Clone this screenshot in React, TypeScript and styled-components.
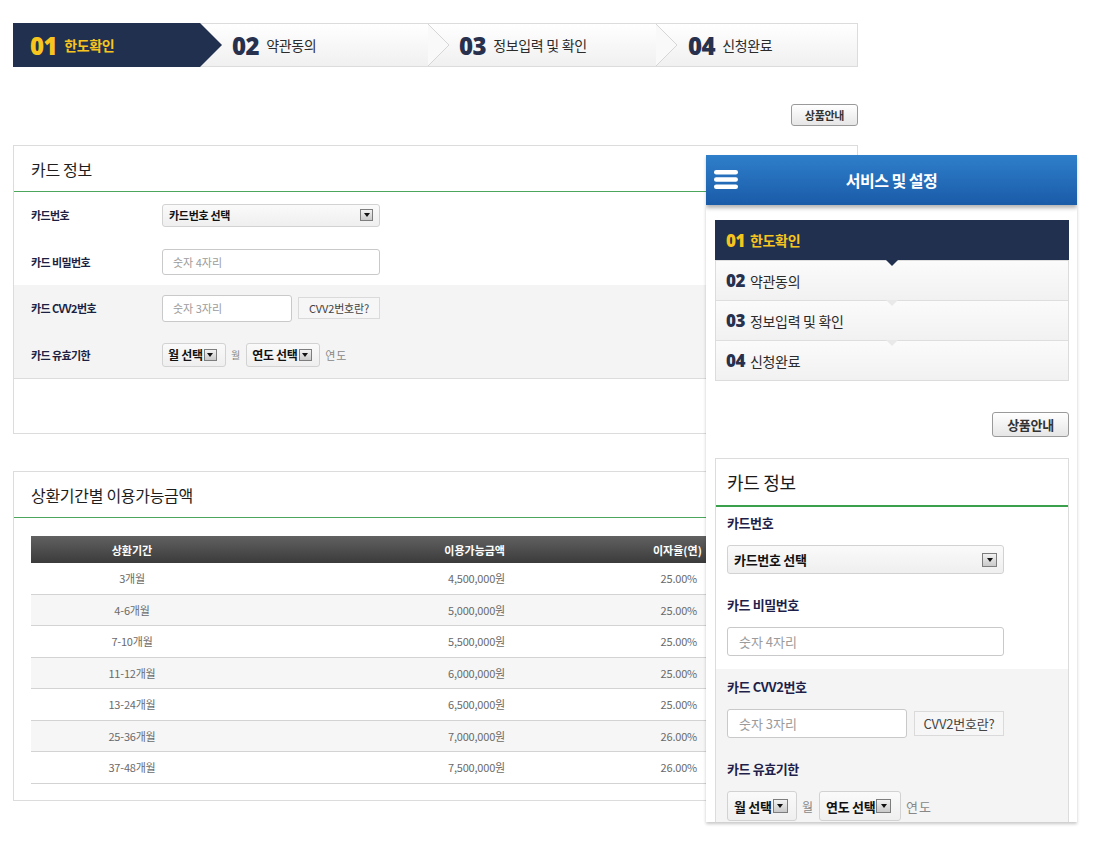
import React from 'react';
import styled, { createGlobalStyle } from 'styled-components';

const GlobalStyle = createGlobalStyle`
  html, body {
    margin: 0;
    padding: 0;
    background: #fff;
  }
  body {
    font-family: 'Noto Sans CJK KR', 'Noto Sans', sans-serif;
    color: #333;
  }
  * {
    box-sizing: border-box;
  }
`;

const NUM_FONT = `'Open Sans', 'Noto Sans CJK KR', sans-serif`;

const Page = styled.div`
	position: relative;
	width: 1100px;
	height: 846px;
	overflow: hidden;
`;

const Desktop = styled.main`
	width: 845px;
	margin-left: 13px;
	padding-top: 23px;
`;

/* ---------- step bar (desktop) ---------- */

const StepBar = styled.ol`
	display: grid;
	grid-template-columns: 209px 228px 228px 1fr;
	height: 44px;
	margin: 0;
	padding: 0;
	list-style: none;
	border: 1px solid #dcdcdc;
	border-left: none;
	background: linear-gradient(#ffffff, #f0f0f0);
`;

const Step = styled.li<{ $active?: boolean; $pad: number }>`
	position: relative;
	display: flex;
	align-items: center;
	gap: 7px;
	padding-left: ${(p) => p.$pad}px;
	${(p) =>
		p.$active &&
		`
		margin: -1px 0;
		background: #22304f;
		clip-path: polygon(0 0, calc(100% - 22px) 0, 100% 50%, calc(100% - 22px) 100%, 0 100%);
	`}
`;

const StepNum = styled.span<{ $active?: boolean; $size: number }>`
	font-family: ${NUM_FONT};
	font-weight: 800;
	font-size: ${(p) => p.$size}px;
	letter-spacing: -0.5px;
	color: ${(p) => (p.$active ? '#f7c51d' : '#27314d')};
`;

const StepText = styled.span<{ $active?: boolean; $size: number }>`
	font-size: ${(p) => p.$size}px;
	font-weight: ${(p) => (p.$active ? 700 : 400)};
	color: ${(p) => (p.$active ? '#f7c51d' : '#2b2b2b')};
	letter-spacing: -0.3px;
`;

const Chevron = styled.svg`
	position: absolute;
	right: 0;
	top: 0;
`;

/* ---------- buttons ---------- */

const ButtonRow = styled.div<{ $top: number; $right?: number }>`
	display: flex;
	justify-content: flex-end;
	margin-top: ${(p) => p.$top}px;
	padding-right: ${(p) => p.$right ?? 0}px;
`;

const GuideButton = styled.button<{ $w: number; $h: number; $fs: number }>`
	width: ${(p) => p.$w}px;
	height: ${(p) => p.$h}px;
	padding: 0;
	border: 1px solid #9a9a9a;
	border-radius: 3px;
	background: linear-gradient(#ffffff, #e6e6e6);
	font-family: inherit;
	font-size: ${(p) => p.$fs}px;
	font-weight: 700;
	color: #333;
	letter-spacing: -0.3px;
`;

/* ---------- desktop boxes ---------- */

const Box = styled.section<{ $top: number; $bottom: number }>`
	margin-top: ${(p) => p.$top}px;
	padding-bottom: ${(p) => p.$bottom}px;
	border: 1px solid #dcdcdc;
	background: #fff;
`;

const BoxTitle = styled.h2`
	display: flex;
	align-items: center;
	height: 46px;
	margin: 0;
	padding: 0 17px;
	border-bottom: 1px solid #4ca65b;
	font-size: 16px;
	font-weight: 400;
	color: #1d1d1d;
	letter-spacing: -0.3px;
`;

const FormSection = styled.div<{ $shaded?: boolean }>`
	background: ${(p) => (p.$shaded ? '#f4f4f4' : '#fff')};
	border-bottom: ${(p) => (p.$shaded ? '1px solid #dcdcdc' : 'none')};
`;

const FormRow = styled.div`
	display: flex;
	align-items: center;
	height: 46.5px;
	padding-left: 17px;
`;

const RowLabel = styled.div`
	width: 131px;
	font-size: 11px;
	font-weight: 700;
	color: #1d1f42;
	letter-spacing: -0.6px;
`;

const Controls = styled.div<{ $gap: number }>`
	display: flex;
	align-items: center;
	gap: ${(p) => p.$gap}px;
`;

const SelectBox = styled.div<{ $w: number; $h: number; $fs: number; $pad: number; $spread?: boolean }>`
	display: flex;
	align-items: center;
	justify-content: ${(p) => (p.$spread ? 'space-between' : 'flex-start')};
	gap: 1px;
	width: ${(p) => p.$w}px;
	height: ${(p) => p.$h}px;
	padding: 0 ${(p) => p.$pad}px;
	border: 1px solid #d2d2d2;
	border-radius: 3px;
	background: linear-gradient(#fafafa, #efefef);
	font-size: ${(p) => p.$fs}px;
	font-weight: 700;
	color: #111;
	letter-spacing: -0.3px;
`;

const Caret = styled.span<{ $s: number }>`
	display: inline-flex;
	align-items: center;
	justify-content: center;
	flex: none;
	width: ${(p) => p.$s + 1}px;
	height: ${(p) => p.$s}px;
	border: 1px solid #7d7d7d;
	background: linear-gradient(#f2f2f2, #c9c9c9);

	&::before {
		content: '';
		border-left: 3.5px solid transparent;
		border-right: 3.5px solid transparent;
		border-top: 4px solid #111;
	}
`;

const TextInput = styled.div<{ $w: number; $h: number; $fs: number; $pad: number }>`
	display: flex;
	align-items: center;
	width: ${(p) => p.$w}px;
	height: ${(p) => p.$h}px;
	padding-left: ${(p) => p.$pad}px;
	border: 1px solid #c9c9c9;
	border-radius: 3px;
	background: #fff;
	font-size: ${(p) => p.$fs}px;
	color: #9b9b9b;
`;

const SmallButton = styled.div<{ $w: number; $h: number; $fs: number }>`
	display: flex;
	align-items: center;
	justify-content: center;
	width: ${(p) => p.$w}px;
	height: ${(p) => p.$h}px;
	border: 1px solid #dadada;
	background: #f6f6f6;
	font-size: ${(p) => p.$fs}px;
	color: #444;
	letter-spacing: -0.2px;
`;

const Unit = styled.span<{ $fs: number }>`
	font-size: ${(p) => p.$fs}px;
	color: #888;
	letter-spacing: 1px;
`;

/* ---------- table ---------- */

const Table = styled.div`
	margin: 18px 17px 0;
	display: grid;
	grid-template-columns: 202px 287px 192px 1fr;
`;

const HeadCell = styled.div<{ $align: string; $pr?: number; $pl?: number }>`
	display: flex;
	align-items: center;
	justify-content: ${(p) => p.$align};
	height: 27px;
	padding-right: ${(p) => p.$pr ?? 0}px;
	padding-left: ${(p) => p.$pl ?? 0}px;
	background: linear-gradient(#616161, #3b3b3b);
	font-size: 11px;
	font-weight: 700;
	color: #fff;
	white-space: nowrap;
`;

const Cell = styled.div<{ $align: string; $shade: boolean; $pr?: number }>`
	display: flex;
	align-items: center;
	justify-content: ${(p) => p.$align};
	height: 31.5px;
	padding-right: ${(p) => p.$pr ?? 0}px;
	border-bottom: 1px solid #d3d3d3;
	background: ${(p) => (p.$shade ? '#f6f6f6' : '#fff')};
	font-size: 11px;
	color: #6a6a6a;
	letter-spacing: -0.2px;
`;

/* ---------- mobile overlay ---------- */

const MobilePanel = styled.aside`
	position: absolute;
	left: 706px;
	top: 155px;
	width: 371px;
	height: 667px;
	overflow: hidden;
	background: #fff;
	box-shadow: 0 2px 3px rgba(0, 0, 0, 0.22);
`;

const MobileHeader = styled.header`
	position: relative;
	display: flex;
	align-items: center;
	justify-content: center;
	height: 50px;
	background: linear-gradient(#2f7fcb, #1a5ba8);
	box-shadow: 0 3px 4px rgba(0, 0, 0, 0.3);
	color: #fff;
	font-size: 16px;
	font-weight: 700;
	letter-spacing: -0.5px;
`;

const MenuIcon = styled.svg`
	position: absolute;
	left: 8px;
	top: 15px;
`;

const MobileSteps = styled.ol`
	margin: 15px 8px 0 9px;
	padding: 0;
	list-style: none;
	border: 1px solid #dcdcdc;
	border-top: none;
`;

const MobileStep = styled.li<{ $active?: boolean }>`
	position: relative;
	display: flex;
	align-items: center;
	gap: 5px;
	height: 40px;
	background: ${(p) => (p.$active ? '#22304f' : 'linear-gradient(#fbfbfb, #f1f1f1)')};
	border-top: ${(p) => (p.$active ? 'none' : '1px solid #dedede')};
	margin: ${(p) => (p.$active ? '0 -1px' : '0')};
	padding-left: ${(p) => (p.$active ? 11 : 10)}px;

	&::after {
		content: '';
		position: absolute;
		left: 50%;
		bottom: -6px;
		margin-left: -6px;
		border-left: 6px solid transparent;
		border-right: 6px solid transparent;
		border-top: 6px solid ${(p) => (p.$active ? '#22304f' : '#e9e9e9')};
		z-index: 2;
	}

	&:last-child::after {
		display: none;
	}
`;

const MobileBox = styled.section`
	margin: 21px 8px 0 9px;
	border: 1px solid #dcdcdc;
`;

const MobileTitle = styled.h2`
	display: flex;
	align-items: center;
	height: 48px;
	margin: 0;
	padding-left: 11px;
	border-bottom: 2px solid #3aa04b;
	font-size: 18px;
	font-weight: 400;
	color: #1a1a1a;
	letter-spacing: -0.3px;
`;

const MobileSection = styled.div<{ $shaded?: boolean }>`
	display: flex;
	flex-direction: column;
	gap: 22px;
	padding: ${(p) => (p.$shaded ? '9px 11px 20px' : '7px 11px 13px')};
	background: ${(p) => (p.$shaded ? '#f4f4f4' : '#fff')};
`;

const Field = styled.div`
	display: flex;
	flex-direction: column;
	gap: 14px;
`;

const FieldLabel = styled.div`
	height: 17px;
	line-height: 17px;
	font-size: 13px;
	font-weight: 700;
	color: #1f1f4a;
	letter-spacing: -0.4px;
`;

/* ---------- data ---------- */

const desktopSteps = [
	{ num: '01', text: '한도확인', pad: 17 },
	{ num: '02', text: '약관동의', pad: 10 },
	{ num: '03', text: '정보입력 및 확인', pad: 9 },
	{ num: '04', text: '신청완료', pad: 10 },
];

const rows = [
	['3개월', '4,500,000원', '25.00%'],
	['4-6개월', '5,000,000원', '25.00%'],
	['7-10개월', '5,500,000원', '25.00%'],
	['11-12개월', '6,000,000원', '25.00%'],
	['13-24개월', '6,500,000원', '25.00%'],
	['25-36개월', '7,000,000원', '26.00%'],
	['37-48개월', '7,500,000원', '26.00%'],
];

const StepChevron: React.FC = () => (
	<Chevron width="22" height="42" viewBox="0 0 22 42">
		<path d="M0 0 L21 21 L0 42 Z" fill="#f9f9f9" />
		<path d="M0 0 L21 21 L0 42" fill="none" stroke="#d6d6d6" strokeWidth="1" />
	</Chevron>
);

export default function App() {
	return (
		<Page>
			<GlobalStyle />
			<Desktop>
				<StepBar>
					{desktopSteps.map((s, i) => (
						<Step key={s.num} $active={i === 0} $pad={s.pad}>
							<StepNum $active={i === 0} $size={24}>
								{s.num}
							</StepNum>
							<StepText $active={i === 0} $size={14}>
								{s.text}
							</StepText>
							{(i === 1 || i === 2) && <StepChevron />}
						</Step>
					))}
				</StepBar>

				<ButtonRow $top={37}>
					<GuideButton $w={67} $h={22} $fs={11}>
						상품안내
					</GuideButton>
				</ButtonRow>

				<Box $top={19} $bottom={54}>
					<BoxTitle>카드 정보</BoxTitle>
					<FormSection>
						<FormRow>
							<RowLabel>카드번호</RowLabel>
							<SelectBox $w={218} $h={23} $fs={11} $pad={6} $spread>
								카드번호 선택
								<Caret $s={12} />
							</SelectBox>
						</FormRow>
						<FormRow>
							<RowLabel>카드 비밀번호</RowLabel>
							<TextInput $w={218} $h={26} $fs={11} $pad={10}>
								숫자 4자리
							</TextInput>
						</FormRow>
					</FormSection>
					<FormSection $shaded>
						<FormRow>
							<RowLabel>카드 CVV2번호</RowLabel>
							<Controls $gap={6}>
								<TextInput $w={130} $h={27} $fs={11} $pad={10}>
									숫자 3자리
								</TextInput>
								<SmallButton $w={82} $h={22} $fs={11}>
									CVV2번호란?
								</SmallButton>
							</Controls>
						</FormRow>
						<FormRow>
							<RowLabel>카드 유효기한</RowLabel>
							<Controls $gap={5}>
								<SelectBox $w={64} $h={24} $fs={12} $pad={5}>
									월 선택
									<Caret $s={12} />
								</SelectBox>
								<Unit $fs={10}>월</Unit>
								<SelectBox $w={74} $h={24} $fs={12} $pad={5}>
									연도 선택
									<Caret $s={12} />
								</SelectBox>
								<Unit $fs={11}>연도</Unit>
							</Controls>
						</FormRow>
					</FormSection>
				</Box>

				<Box $top={37} $bottom={16}>
					<BoxTitle>상환기간별 이용가능금액</BoxTitle>
					<Table>
						<HeadCell $align="center">상환기간</HeadCell>
						<HeadCell $align="flex-end" $pr={15}>
							이용가능금액
						</HeadCell>
						<HeadCell $align="flex-start" $pl={133}>
							이자율(연)
						</HeadCell>
						<HeadCell $align="center" />
						{rows.map((r, i) => (
							<React.Fragment key={r[0]}>
								<Cell $align="center" $shade={i % 2 === 1}>
									{r[0]}
								</Cell>
								<Cell $align="flex-end" $pr={15} $shade={i % 2 === 1}>
									{r[1]}
								</Cell>
								<Cell $align="flex-end" $pr={15} $shade={i % 2 === 1}>
									{r[2]}
								</Cell>
								<Cell $align="center" $shade={i % 2 === 1} />
							</React.Fragment>
						))}
					</Table>
				</Box>
			</Desktop>

			<MobilePanel>
				<MobileHeader>
					<MenuIcon width="24" height="19" viewBox="0 0 24 19">
						<rect x="0" y="0" width="24" height="4.5" rx="2.2" fill="#fff" />
						<rect x="0" y="7.2" width="24" height="4.5" rx="2.2" fill="#fff" />
						<rect x="0" y="14.4" width="24" height="4.5" rx="2.2" fill="#fff" />
					</MenuIcon>
					서비스 및 설정
				</MobileHeader>

				<MobileSteps>
					{desktopSteps.map((s, i) => (
						<MobileStep key={s.num} $active={i === 0}>
							<StepNum $active={i === 0} $size={17}>
								{s.num}
							</StepNum>
							<StepText $active={i === 0} $size={14}>
								{s.text}
							</StepText>
						</MobileStep>
					))}
				</MobileSteps>

				<ButtonRow $top={31} $right={8}>
					<GuideButton $w={77} $h={25} $fs={13}>
						상품안내
					</GuideButton>
				</ButtonRow>

				<MobileBox>
					<MobileTitle>카드 정보</MobileTitle>
					<MobileSection>
						<Field>
							<FieldLabel>카드번호</FieldLabel>
							<SelectBox $w={277} $h={29} $fs={13} $pad={6} $spread>
								카드번호 선택
								<Caret $s={14} />
							</SelectBox>
						</Field>
						<Field>
							<FieldLabel>카드 비밀번호</FieldLabel>
							<TextInput $w={277} $h={29} $fs={13} $pad={11}>
								숫자 4자리
							</TextInput>
						</Field>
					</MobileSection>
					<MobileSection $shaded>
						<Field>
							<FieldLabel>카드 CVV2번호</FieldLabel>
							<Controls $gap={7}>
								<TextInput $w={180} $h={29} $fs={13} $pad={11}>
									숫자 3자리
								</TextInput>
								<SmallButton $w={90} $h={25} $fs={13}>
									CVV2번호란?
								</SmallButton>
							</Controls>
						</Field>
						<Field>
							<FieldLabel>카드 유효기한</FieldLabel>
							<Controls $gap={5}>
								<SelectBox $w={70} $h={30} $fs={13} $pad={6}>
									월 선택
									<Caret $s={14} />
								</SelectBox>
								<Unit $fs={12}>월</Unit>
								<SelectBox $w={82} $h={30} $fs={13} $pad={6}>
									연도 선택
									<Caret $s={14} />
								</SelectBox>
								<Unit $fs={13}>연도</Unit>
							</Controls>
						</Field>
					</MobileSection>
				</MobileBox>
			</MobilePanel>
		</Page>
	);
}
